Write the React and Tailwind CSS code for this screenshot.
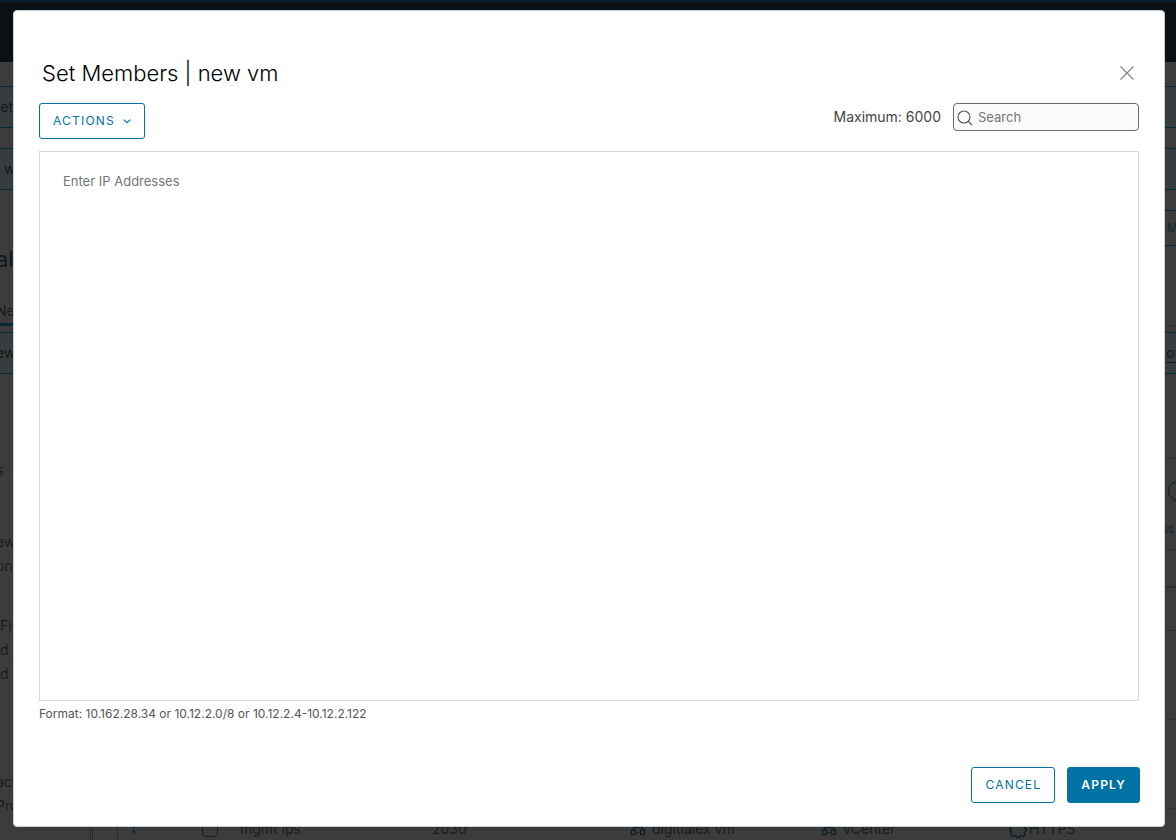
import React, { useState } from 'react';

const CloseIcon = () => (
    <svg width="14" height="14" viewBox="0 0 14 14" fill="none" stroke="#8c8c8c" strokeWidth="1.4" aria-hidden="true">
        <path d="M0.5 0.5 L13.5 13.5 M13.5 0.5 L0.5 13.5" />
    </svg>
);

const SearchIcon = () => (
    <svg width="16" height="16" viewBox="0 0 16 16" fill="none" stroke="#565656" strokeWidth="1.1" aria-hidden="true">
        <circle cx="7" cy="7" r="6" />
        <path d="M11.5 11.5 L15 15" />
    </svg>
);

const ChevronIcon = () => (
    <svg width="8" height="5" viewBox="0 0 8 5" fill="none" stroke="#0072a3" strokeWidth="1.2" aria-hidden="true">
        <path d="M0.6 0.6 L4 3.8 L7.4 0.6" />
    </svg>
);

const DotsIcon = () => (
    <svg width="3" height="14" viewBox="0 0 3 14" fill="#06222f" aria-hidden="true">
        <circle cx="1.5" cy="1.5" r="1.4" />
        <circle cx="1.5" cy="5" r="1.4" />
        <circle cx="1.5" cy="9.5" r="1.4" />
    </svg>
);

const GroupIcon = () => (
    <svg width="16" height="14" viewBox="0 0 16 14" fill="none" stroke="#0a1d26" strokeWidth="1.2" aria-hidden="true">
        <rect x="1.5" y="8" width="4" height="4.5" />
        <rect x="10.5" y="8" width="4" height="4.5" />
        <path d="M7 10.5 H9 M3.5 8 V5.5 H12.5 V8" />
    </svg>
);

const GearIcon = () => (
    <svg width="18" height="18" viewBox="0 0 18 18" fill="none" stroke="#0a1d26" strokeWidth="1.3" aria-hidden="true">
        <path d="M7.6 1 h2.8 l.5 2.2 1.6.7 1.9-1.2 1.9 1.9-1.2 1.9.7 1.6 1.7 .4 v2.2 l-1.7 .5-.7 1.6 1.2 1.9-1.9 1.9-1.9-1.2-1.6.7-.5 1.4 h-2.8 l-.5-1.4-1.6-.7-1.9 1.2-1.9-1.9 1.2-1.9-.7-1.6-1.4-.5 v-2.2 l1.4-.4.7-1.6-1.2-1.9 1.9-1.9 1.9 1.2 1.6-.7z" />
    </svg>
);

const Banner = ({ children }) => (
    <div className="flex h-[42px] shrink-0 items-center justify-between overflow-hidden border-y border-[#06293a] bg-[#373c3f] text-sm text-[#151515]">
        {children}
    </div>
);

// Page that stays behind the dialog
const BackgroundPage = () => (
    <div className="flex h-screen flex-col overflow-hidden bg-[#3c3c3c] text-sm text-[#1b1b1b]" aria-hidden="true">
        <div className="h-[62px] shrink-0 border-t-2 border-[#00202e] bg-[#0b1014]" />
        <div className="flex shrink-0 flex-col gap-5 pt-6">
            <Banner><span className="-ml-2">net</span></Banner>
            <Banner><span className="pl-1">w</span></Banner>
        </div>
        <div className="mt-5 flex h-9 w-24 shrink-0 items-center justify-end self-end border-y border-[#06293a] text-xs text-[#0c2733]">
            <span className="-mr-0.5">M</span>
        </div>
        <div className="mt-px flex h-[26px] shrink-0 items-center text-[22px] text-[#10161b]"><span className="-ml-1">al</span></div>
        <div className="mt-[23px] flex h-[30px] shrink-0 items-center border-b border-[#303030]"><span className="-ml-1">Ne</span></div>
        <div className="-mt-[3px] mb-[6px] h-[3px] w-8 shrink-0 bg-[#06293a]" />
        <Banner>
            <span className="-ml-1">ew</span>
            <span className="-mr-1 underline underline-offset-4">or</span>
        </Banner>
        <div className="flex min-h-0 flex-1">
            <div className="w-[93px] shrink-0 overflow-hidden border-r-3 border-double border-[#2b2b2b] leading-6">
                <p className="-ml-1 mt-[84px]">s</p>
                <p className="-ml-1 mt-12">ew</p>
                <p className="-ml-1">onn</p>
                <p className="mt-9">Fir</p>
                <p>d</p>
                <p>d</p>
                <p className="-ml-1 mt-[84px]">ach</p>
                <p className="-ml-1">Pro</p>
            </div>
            <div className="ml-6 flex min-w-0 flex-1 flex-col border-l border-[#2b2b2b] pt-[84px]">
                <div className="flex h-[92px] shrink-0 flex-col items-end justify-end gap-5 overflow-hidden border-y border-[#303030] pb-3 text-xs text-[#0c2733]">
                    <span className="-mr-3 h-5 w-5 rounded-full border border-[#0a1d26]" />
                    <span className="pr-0.5">ss</span>
                </div>
                <div className="h-[38px] shrink-0 border-b-2 border-[#303030]" />
                <div className="h-[43px] shrink-0 border-b border-[#303030]" />
                <div className="h-[89px] shrink-0 border-b border-[#303030]" />
                <div className="h-[89px] shrink-0 border-b border-[#303030]" />
                <div className="grid h-10 shrink-0 grid-cols-[84px_190px_198px_191px_188px_1fr] items-center">
                    <span className="pl-[14px]"><DotsIcon /></span>
                    <span className="flex items-center gap-[22px]"><span className="h-4 w-4 rounded-sm border border-[#1b1b1b]" />mgmt ips</span>
                    <span className="pl-10">2030</span>
                    <span className="flex items-center gap-1.5 pl-10"><GroupIcon />digitialex vm</span>
                    <span className="flex items-center gap-1.5 pl-10"><GroupIcon />vCenter</span>
                    <span className="flex items-center gap-0.5 pl-10"><GearIcon />HTTPS</span>
                </div>
            </div>
        </div>
    </div>
);

const App = () => {
    const [addresses, setAddresses] = useState('');
    const [search, setSearch] = useState('');

    return (
        <div className="relative min-h-screen font-['Inter',sans-serif]">
            <BackgroundPage />

            <div className="fixed inset-0 flex pt-[10px] pr-[11px] pb-[13px] pl-[13px]">
                <div role="dialog" aria-labelledby="dialog-title" className="flex min-w-0 flex-1 flex-col rounded border border-[#c6d2d8] bg-white px-[25px] pt-[46px] pb-[23px]">
                    {/* Title */}
                    <div className="flex h-8 items-center justify-between pr-[5px] pl-[3px]">
                        <h1 id="dialog-title" className="text-[22px] leading-8 font-light text-black">Set Members | new vm</h1>
                        <button type="button" aria-label="Close" className="flex h-6 items-center">
                            <CloseIcon />
                        </button>
                    </div>

                    {/* Toolbar */}
                    <div className="mt-[14px] flex items-start justify-between">
                        <button type="button" className="flex h-9 items-center gap-2 rounded-[3px] border border-[#0072a3] px-[13px] text-xs tracking-widest text-[#0072a3]">
                            ACTIONS
                            <ChevronIcon />
                        </button>
                        <div className="flex items-center gap-3">
                            <span className="text-sm text-[#454545]">Maximum: 6000</span>
                            <label className="flex h-7 w-[186px] items-center gap-[5px] rounded border border-[#6a6a6a] bg-[#fafafa] pt-0.5 pl-[3px]">
                                <SearchIcon />
                                <input
                                    type="text"
                                    aria-label="Search"
                                    placeholder="Search"
                                    value={search}
                                    onChange={(e) => setSearch(e.target.value)}
                                    className="min-w-0 flex-1 bg-transparent text-[13px] text-[#454545] outline-none placeholder:text-[#757575]"
                                />
                            </label>
                        </div>
                    </div>

                    {/* Addresses */}
                    <textarea
                        aria-label="IP Addresses"
                        aria-describedby="address-format"
                        placeholder="Enter IP Addresses"
                        value={addresses}
                        onChange={(e) => setAddresses(e.target.value)}
                        className="mt-3 min-h-0 flex-1 resize-none border border-[#d8d8d8] px-[23px] py-[19px] text-[13px] leading-5 text-[#454545] outline-none placeholder:text-[#757575]"
                    />
                    <p id="address-format" className="mt-1 text-xs leading-[18px] text-[#565656]">
                        Format: 10.162.28.34 or 10.12.2.0/8 or 10.12.2.4-10.12.2.122
                    </p>

                    {/* Footer buttons */}
                    <div className="mt-11 -mr-px flex justify-end gap-3">
                        <button type="button" className="h-9 rounded-[3px] border border-[#0072a3] px-[13px] text-xs tracking-widest text-[#0072a3]">CANCEL</button>
                        <button type="button" className="h-9 rounded-[3px] border border-[#0072a3] bg-[#0072a3] px-[13px] text-xs font-semibold tracking-widest text-white">APPLY</button>
                    </div>
                </div>
            </div>
        </div>
    );
};

export default App;
